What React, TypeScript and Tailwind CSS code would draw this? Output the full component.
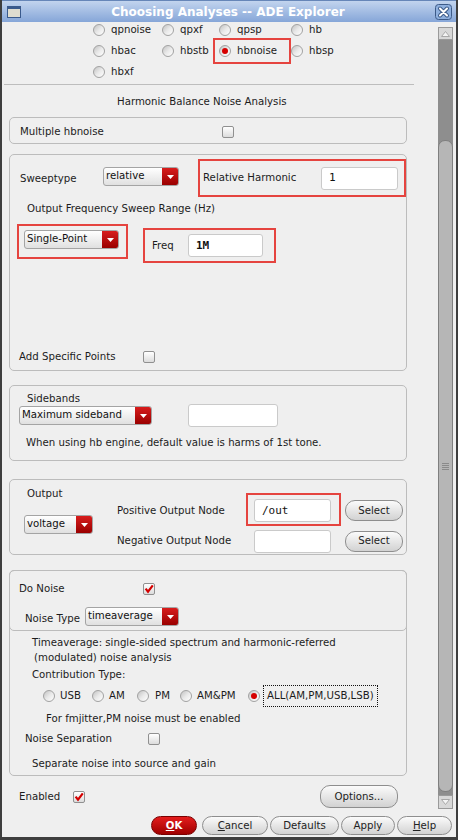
import React from "react";

const Radio = ({ checked = false }: { checked?: boolean }) => (
  <span className="flex h-[12px] w-[12px] shrink-0 items-center justify-center rounded-full border border-[#a2a2a2] bg-linear-to-br from-[#c2c2c2] via-[#e9e9e9] to-white">
    {checked && <span className="h-[6px] w-[6px] rounded-full bg-[#d60000]" />}
  </span>
);

const Check = ({ checked = false }: { checked?: boolean }) => (
  <span className="flex h-[12px] w-[12px] shrink-0 items-center justify-center rounded-[2px] border border-[#909090] bg-linear-to-b from-white to-[#dcdcdc]">
    {checked && (
      <svg width="10" height="10" viewBox="0 0 10 10">
        <path d="M1.6 4.6 L4 7.6 L8.8 1.4" fill="none" stroke="#d40000" strokeWidth="2.2" />
      </svg>
    )}
  </span>
);

const Drop = ({ label, w }: { label: string; w: string }) => (
  <div className={`flex h-[19px] ${w} shrink-0 overflow-hidden rounded-[3px] border border-[#a4a4a4] bg-linear-to-b from-white to-[#e0e0e0]`}>
    <span className="flex-1 whitespace-nowrap pl-[2px] leading-[15px] text-[#111]">{label}</span>
    <span className="flex w-[16px] items-center justify-center bg-linear-to-b from-[#d81c1c] to-[#9a0000]">
      <svg width="7" height="4" viewBox="0 0 7 4">
        <path d="M0 0h7L3.5 4z" fill="#fff" />
      </svg>
    </span>
  </div>
);

const Input = ({ value = "", w, bold = false }: { value?: string; w: string; bold?: boolean }) => (
  <div className={`flex h-[23px] ${w} shrink-0 items-center rounded-[3px] border border-[#cacaca] bg-white pl-[7px] font-['DejaVu_Sans_Mono',monospace] text-[11px] text-[#111] ${bold ? "font-bold" : ""}`}>
    {value}
  </div>
);

const Btn = ({ children, w, h = "h-[21px]" }: { children: React.ReactNode; w: string; h?: string }) => (
  <div className={`flex ${h} ${w} shrink-0 items-center justify-center rounded-[10px] border border-[#8e8e8e] bg-linear-to-b from-[#fbfbfb] to-[#d2d2d2] text-[#222]`}>
    {children}
  </div>
);

const Box = ({ children, h, mt }: { children: React.ReactNode; h: string; mt: string }) => (
  <div className={`${mt} ml-[7px] flex ${h} w-[398px] flex-col rounded-[5px] border border-[#bcbcbc]`}>{children}</div>
);

export default function App() {
  return (
    <div className="flex h-[840px] w-[458px] flex-col overflow-hidden border-x-2 border-b-[3px] border-[#3e3e3e] bg-[#efefef] font-['DejaVu_Sans',sans-serif] text-[10.2px] leading-[14px] text-[#1c1c1c]">
      {/* Title bar */}
      <div className="flex h-[22px] shrink-0 items-center border-t border-[#6686b8] bg-linear-to-b from-[#c2d4ee] to-[#86a6d8]">
        <svg className="ml-[5px]" width="14" height="12" viewBox="0 0 14 12">
          <rect x="0.5" y="0.5" width="13" height="11" fill="#dedcd0" stroke="#3a5a8c" />
          <rect x="0.5" y="0.5" width="13" height="2.5" fill="#3a5a8c" />
        </svg>
        <div className="flex-1 text-center text-[12px] font-bold tracking-[0px] text-white">Choosing Analyses -- ADE Explorer</div>
        <svg className="mr-[4px]" width="17" height="16" viewBox="0 0 17 16">
          <rect x="0.5" y="0.5" width="16" height="15" rx="3" fill="#8fb0de" stroke="#3c5a88" />
          <path d="M5 4.5 L12 11.5 M12 4.5 L5 11.5" stroke="#3c5a88" strokeWidth="4" strokeLinecap="round" />
          <path d="M5 4.5 L12 11.5 M12 4.5 L5 11.5" stroke="#fff" strokeWidth="2" strokeLinecap="round" />
        </svg>
      </div>

      {/* Main */}
      <div className="flex h-[789px] shrink-0">
        <div className="flex w-[436px] flex-col overflow-hidden">
          {/* radio grid */}
          <div className="mt-[-3px] flex flex-col pl-[91px]">
            <div className="flex h-[21px] items-center">
              <div className="flex w-[69px] items-center gap-[6px]"><Radio /><span>qpnoise</span></div>
              <div className="flex w-[57px] items-center gap-[6px]"><Radio /><span>qpxf</span></div>
              <div className="flex w-[72px] items-center gap-[6px]"><Radio /><span>qpsp</span></div>
              <div className="flex items-center gap-[6px]"><Radio /><span>hb</span></div>
            </div>
            <div className="flex h-[21px] items-center">
              <div className="flex w-[69px] items-center gap-[6px]"><Radio /><span>hbac</span></div>
              <div className="flex w-[57px] items-center gap-[6px]"><Radio /><span>hbstb</span></div>
              <div className="relative flex w-[72px] items-center gap-[6px]">
                <Radio checked /><span>hbnoise</span>
                <div className="absolute left-[-6px] top-[-6px] h-[26px] w-[78px] border-2 border-[#e5443f]" />
              </div>
              <div className="flex items-center gap-[6px]"><Radio /><span>hbsp</span></div>
            </div>
            <div className="flex h-[21px] items-center">
              <div className="flex w-[69px] items-center gap-[6px]"><Radio /><span>hbxf</span></div>
            </div>
          </div>
          <div className="ml-[2px] mt-[2px] h-px w-[410px] bg-[#bdbdbd]" />
          <div className="mt-[10px] pl-[115px]">Harmonic Balance Noise Analysis</div>

          {/* Box 1 */}
          <Box h="h-[27px]" mt="mt-[8px]">
            <div className="flex h-full items-center pl-[10px] pt-[2px]">
              <span className="w-[202px]">Multiple hbnoise</span>
              <Check />
            </div>
          </Box>

          {/* Box 2 */}
          <Box h="h-[217px]" mt="mt-[10px]">
            <div className="mt-[4px] flex h-[38px] items-start pl-[10px]">
              <span className="mt-[13px] w-[84px]">Sweeptype</span>
              <div className="mt-[8px]"><Drop label="relative" w="w-[76px]" /></div>
              <div className="ml-[19px] flex h-[38px] w-[208px] shrink-0 items-center border-2 border-[#e5443f]">
                <span className="w-[121px] pl-[3px]">Relative Harmonic</span>
                <Input value="1" w="w-[77px]" />
              </div>
            </div>
            <div className="mt-[5px] pl-[17px]">Output Frequency Sweep Range (Hz)</div>
            <div className="mt-[8px] flex items-start pl-[7px]">
              <div className="h-[35px] w-[111px] border-2 border-[#e5443f] pl-[5px] pt-[4px]">
                <Drop label="Single-Point" w="w-[95px]" />
              </div>
              <div className="ml-[15px] mt-[4px] flex h-[35px] w-[133px] items-center border-2 border-[#e5443f] pl-[7px]">
                <span className="w-[36px]">Freq</span>
                <Input value="1M" w="w-[75px]" bold />
              </div>
            </div>
            <div className="mb-[6px] mt-auto flex h-[14px] items-center pl-[9px]">
              <span className="w-[124px]">Add Specific Points</span>
              <Check />
            </div>
          </Box>

          {/* Box 3 */}
          <Box h="h-[76px]" mt="mt-[14px]">
            <div className="mt-[6px] pl-[17px]">Sidebands</div>
            <div className="mt-[-2px] flex h-[23px] items-center pl-[9px]">
              <Drop label="Maximum sideband" w="w-[133px]" />
              <div className="ml-[36px]"><Input w="w-[90px]" /></div>
            </div>
            <div className="mt-[9px] pl-[16px]">When using hb engine, default value is harms of 1st tone.</div>
          </Box>

          {/* Box 4 */}
          <div className="ml-[7px] mt-[18px] flex h-[76px] w-[398px] rounded-[5px] border border-[#bcbcbc]">
            <div className="flex w-[107px] flex-col pl-[14px]">
              <div className="mt-[7px] pl-[3px]">Output</div>
              <div className="mt-[14px]"><Drop label="voltage" w="w-[69px]" /></div>
            </div>
            <div className="flex flex-col">
              <div className="mt-[19px] flex h-[23px] items-center">
                <span className="w-[137px]">Positive Output Node</span>
                <div className="relative">
                  <Input value="/out" w="w-[77px]" />
                  <div className="absolute left-[-8px] top-[-6px] h-[33px] w-[95px] border-2 border-[#e5443f]" />
                </div>
                <div className="ml-[14px]"><Btn w="w-[58px]">Select</Btn></div>
              </div>
              <div className="mt-[7px] flex h-[24px] items-center">
                <span className="w-[137px]">Negative Output Node</span>
                <Input w="w-[77px]" />
                <div className="ml-[14px]"><Btn w="w-[58px]">Select</Btn></div>
              </div>
            </div>
          </div>

          {/* Box 5 */}
          <Box h="h-[206px]" mt="mt-[15px]">
            <div className="-mx-px -mt-px flex h-[61px] flex-col rounded-[5px] border border-[#bcbcbc]">
              <div className="mt-[11px] flex h-[14px] items-center pl-[9px]">
                <span className="w-[124px]">Do Noise</span>
                <Check checked />
              </div>
              <div className="mt-[11px] flex items-start pl-[15px]">
                <span className="mt-[5px] w-[60px]">Noise Type</span>
                <Drop label="timeaverage" w="w-[94px]" />
              </div>
            </div>
            <div className="mt-[5px] pl-[22px]">Timeaverage: single-sided spectrum and harmonic-referred</div>
            <div className="mt-px pl-[24px]">(modulated) noise analysis</div>
            <div className="mt-[3px] pl-[22px]">Contribution Type:</div>
            <div className="mt-[3px] flex h-[22px] items-center pl-[33px]">
              <div className="flex w-[49px] items-center gap-[5px]"><Radio /><span>USB</span></div>
              <div className="flex w-[45px] items-center gap-[5px]"><Radio /><span>AM</span></div>
              <div className="flex w-[43px] items-center gap-[6px]"><Radio /><span>PM</span></div>
              <div className="flex w-[68px] items-center gap-[5px]"><Radio /><span>AM&amp;PM</span></div>
              <div className="flex items-center">
                <Radio checked />
                <span className="ml-[3px] flex h-[22px] items-center border border-dotted border-[#111] px-[3px]">ALL(AM,PM,USB,LSB)</span>
              </div>
            </div>
            <div className="mt-[5px] pl-[36px]">For fmjitter,PM noise must be enabled</div>
            <div className="mt-[6px] flex h-[14px] items-center pl-[15px]">
              <span className="w-[123px]">Noise Separation</span>
              <Check />
            </div>
            <div className="mt-[11px] pl-[22px]">Separate noise into source and gain</div>
          </Box>

          {/* Enabled row */}
          <div className="mt-[9px] flex h-[23px] items-center pl-[17px]">
            <span className="w-[54px]">Enabled</span>
            <Check checked />
            <div className="ml-[235px]"><Btn w="w-[78px]" h="h-[23px]">Options...</Btn></div>
          </div>
        </div>

        {/* Scrollbar */}
        <div className="flex w-[15px] flex-col pb-[2px] pt-[5px]">
          <div className="flex h-[13px] items-center justify-center border border-[#9a9a9a] bg-[#d8d8d8]">
            <svg width="9" height="6" viewBox="0 0 9 6"><path d="M4.5 0.5 L8.5 5.5 H0.5 Z" fill="#f4f4f4" stroke="#a8a8a8" /></svg>
          </div>
          <div className="flex flex-1 flex-col bg-[#8e8e8e] pb-[3px] pt-[100px]">
            <div className="flex flex-1 items-center justify-center rounded-[7px] border border-[#7f7f7f] bg-[#b6b6b6]">
              <svg width="7" height="7" viewBox="0 0 7 7"><path d="M0 0.5H7M0 2.5H7M0 4.5H7M0 6.5H7" stroke="#8a8a8a" /></svg>
            </div>
          </div>
          <div className="flex h-[14px] items-center justify-center border border-[#9a9a9a] bg-[#d8d8d8]">
            <svg width="9" height="6" viewBox="0 0 9 6"><path d="M4.5 5.5 L8.5 0.5 H0.5 Z" fill="#f4f4f4" stroke="#a8a8a8" /></svg>
          </div>
        </div>
        <div className="w-[3px]" />
      </div>

      {/* Bottom buttons */}
      <div className="flex flex-1 items-start pl-[149px] pt-[5px]">
        <div className="flex h-[19px] w-[46px] items-center justify-center rounded-[10px] border border-[#7a0000] bg-linear-to-b from-[#e41c1c] to-[#a00000] font-bold text-white">
          <span><span className="underline">O</span>K</span>
        </div>
        <div className="ml-[5px]"><Btn w="w-[66px]" h="h-[19px]"><span><span className="underline">C</span>ancel</span></Btn></div>
        <div className="ml-[2px]"><Btn w="w-[69px]" h="h-[19px]">Defaults</Btn></div>
        <div className="ml-[2px]"><Btn w="w-[54px]" h="h-[19px]">Apply</Btn></div>
        <div className="ml-[2px]"><Btn w="w-[55px]" h="h-[19px]"><span><span className="underline">H</span>elp</span></Btn></div>
      </div>
    </div>
  );
}
